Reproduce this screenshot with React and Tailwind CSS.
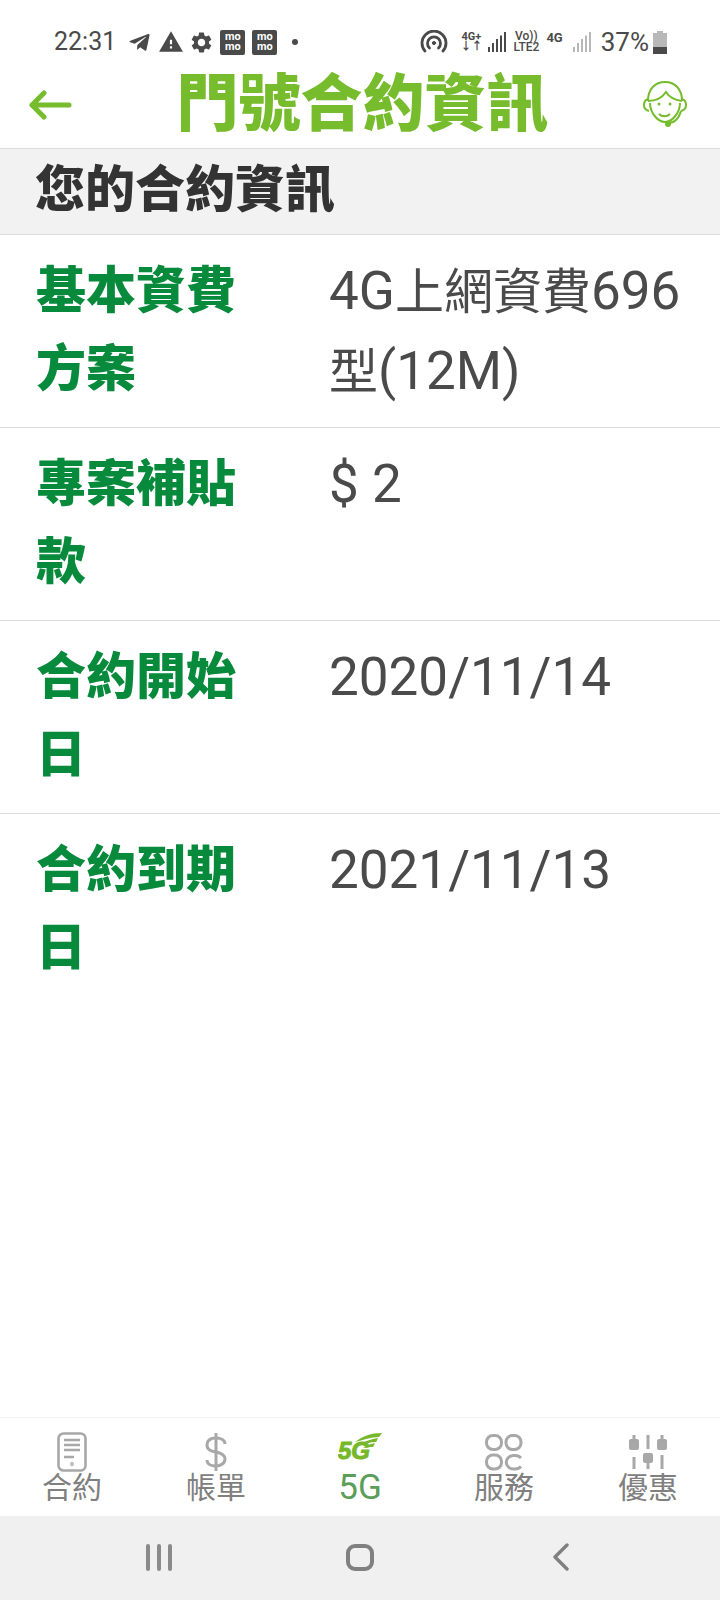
import { FaTelegramPlane } from 'react-icons/fa'
import { MdSettings, MdWarning } from 'react-icons/md'

const rows = [
  { label: '基本資費方案', value: ['4G', { cjk: '上網資費' }, '696', { cjk: '型' }, '(12M)'] },
  { label: '專案補貼款', value: ['$ 2'] },
  { label: '合約開始日', value: ['2020/11/14'] },
  { label: '合約到期日', value: ['2021/11/13'] },
]

function Momo() {
  return (
    <div className="flex h-[25px] w-[25px] flex-col items-center justify-center rounded-[2px] bg-[#4a4a4a] text-[11px] font-bold leading-[10px] text-white">
      <span>mo</span>
      <span>mo</span>
    </div>
  )
}

function Signal({ color }) {
  return (
    <svg width="19" height="20" viewBox="0 0 19 20" fill={color}>
      <rect x="0" y="15" width="2" height="5" />
      <rect x="4" y="11" width="2" height="9" />
      <rect x="8" y="7" width="2" height="13" />
      <rect x="12" y="3.5" width="2" height="16.5" />
      <rect x="16" y="0" width="2" height="20" />
    </svg>
  )
}

function StatusBar() {
  return (
    <div className="flex h-[64px] items-end justify-between pb-[2px] pl-[54px] pr-[53px] text-[#4a4a4a]">
      <div className="flex items-center">
        <span className="text-[25px] leading-[40px]">22:31</span>
        <FaTelegramPlane className="ml-[12px]" size={23} color="#4a4a4a" />
        <MdWarning className="ml-[7px]" size={26} color="#4a4a4a" />
        <MdSettings className="ml-[5px]" size={25} color="#4a4a4a" />
        <div className="ml-[6px]"><Momo /></div>
        <div className="ml-[7px]"><Momo /></div>
        <span className="ml-[15px] h-[6px] w-[6px] rounded-full bg-[#4a4a4a]" />
      </div>
      <div className="flex items-center">
        <svg width="28" height="24" viewBox="0 0 28 24" fill="none" stroke="#4a4a4a" strokeWidth="2.8" strokeLinecap="round">
          <path d="M5 21a12 12 0 1 1 18 0" />
          <path d="M9.5 18a6.5 6.5 0 1 1 9 0" />
          <circle cx="14" cy="13" r="1.6" fill="#4a4a4a" strokeWidth="1" />
        </svg>
        <div className="ml-[12px] flex w-[22px] flex-col items-center text-[11px] font-bold leading-[10px]">
          <span>4G+</span>
          <span>↓↑</span>
        </div>
        <div className="ml-[6px]"><Signal color="#4a4a4a" /></div>
        <div className="ml-[6px] flex flex-col items-center text-[12px] font-medium leading-[11px]">
          <span>Vo))</span>
          <span>LTE2</span>
        </div>
        <span className="mb-[9px] ml-[7px] text-[13px] font-bold leading-[11px]">4G</span>
        <div className="ml-[10px]"><Signal color="#b8b8b8" /></div>
        <span className="ml-[9px] text-[26px] leading-[40px]">37%</span>
        <div className="ml-[4px] flex h-[23px] w-[14px] flex-col">
          <span className="mx-auto h-[2px] w-[6px] bg-[#b8b8b8]" />
          <span className="h-[14px] bg-[#b8b8b8]" />
          <span className="h-[7px] bg-[#4a4a4a]" />
        </div>
      </div>
    </div>
  )
}

function Header() {
  return (
    <div className="flex h-[85px] items-center justify-between border-b border-[#dcdcdc] pb-[3px] pl-[28px] pr-[33px]">
      <svg width="44" height="30" viewBox="0 0 44 30" fill="none" stroke="#76bc2c" strokeWidth="5" strokeLinecap="round" strokeLinejoin="round">
        <path d="M41 15H4M16 3 4 15l12 12" />
      </svg>
      <h1 className="ml-[10px] text-[62px] font-black leading-none text-[#76bc2c]">門號合約資訊</h1>
      <svg width="44" height="48" viewBox="0 0 44 48" fill="none" stroke="#76bc2c" strokeWidth="2">
        <path d="M5 20C5 8 12 1 22 1s17 7 17 19" />
        <path d="M5 18c-3 1-4 4-4 6s1 5 5 6M39 18c3 1 4 4 4 6s-1 5-5 6" />
        <path d="M5 20c7 0 14-3 18-9 3 5 9 8 16 9" />
        <path d="M7 22c0 10 8 19 15 19s15-9 15-19" />
        <path d="M16 33c3 3 8 3 11 0" />
        <path d="M25 42c7 0 11-5 13-12" />
        <circle cx="16" cy="23" r="1.5" fill="#76bc2c" stroke="none" />
        <circle cx="27" cy="23" r="1.5" fill="#76bc2c" stroke="none" />
        <circle cx="25" cy="43" r="3" fill="#76bc2c" stroke="none" />
      </svg>
    </div>
  )
}

function TabIcon({ name }) {
  if (name === 'contract') {
    return (
      <svg width="30" height="40" viewBox="0 0 30 40" fill="none" stroke="#a8a8a8" strokeWidth="2.6">
        <rect x="1.5" y="1.5" width="27" height="37" rx="5" />
        <path d="M7 8h16M7 13h16M7 18h16M7 25h10" />
        <circle cx="15" cy="32" r="0.6" />
      </svg>
    )
  }
  if (name === 'bill') {
    return (
      <svg width="24" height="40" viewBox="0 0 24 40" fill="none" stroke="#a8a8a8" strokeWidth="3">
        <path d="M12 1v38" />
        <path d="M21 12c0-4-4-6-9-6s-9 2-9 7 4 6 9 7 9 3 9 7-4 7-9 7-9-2-9-6" />
      </svg>
    )
  }
  if (name === '5g') {
    return (
      <svg className="mb-[8px]" width="44" height="30" viewBox="0 0 44 30" fill="#76b82a">
        <text x="0" y="26" fontFamily="Liberation Sans" fontSize="24" fontWeight="700" fontStyle="italic" stroke="#76b82a" strokeWidth="1">5G</text>
        <path d="M17 9C25 3 33 0 44 0c-1 1-2 3-3 4-8 0-16 3-24 5Z" />
        <path d="M21 12c6-4 12-6 19-7-1 2-1 3-2 4-6 0-11 2-17 3Z" />
        <path d="M25 15c4-3 8-4 12-5l-2 4c-3 0-7 0-10 1Z" />
      </svg>
    )
  }
  if (name === 'service') {
    return (
      <svg width="38" height="37" viewBox="0 0 38 37" fill="none" stroke="#a8a8a8" strokeWidth="3">
        <rect x="1.5" y="1.5" width="15" height="14" rx="6.5" />
        <rect x="21" y="1.5" width="15" height="14" rx="6.5" />
        <rect x="1.5" y="21" width="15" height="14" rx="6.5" />
        <path d="M36 24a7.5 6.5 0 0 0-6-2.5h-1.5a7 6.5 0 0 0 0 13.5H30a7.5 6.5 0 0 0 6-2.5" />
      </svg>
    )
  }
  return (
    <svg width="38" height="34" viewBox="0 0 38 34" fill="#a8a8a8">
      <rect x="0" y="4" width="10" height="11" rx="2" />
      <rect x="3.5" y="0" width="3" height="6" />
      <rect x="3.5" y="22" width="3" height="12" />
      <rect x="17.5" y="0" width="3" height="14" />
      <rect x="14" y="18" width="10" height="10" rx="2" />
      <rect x="17.5" y="26" width="3" height="8" />
      <rect x="28" y="4" width="10" height="11" rx="2" />
      <rect x="31.5" y="0" width="3" height="6" />
      <rect x="31.5" y="20" width="3" height="14" />
    </svg>
  )
}

const tabs = [
  { name: 'contract', label: '合約' },
  { name: 'bill', label: '帳單' },
  { name: '5g', label: '5G', active: true },
  { name: 'service', label: '服務' },
  { name: 'promo', label: '優惠' },
]

export default function App() {
  return (
    <div
      className="flex h-[1600px] w-[720px] flex-col overflow-hidden bg-white"
      style={{ fontFamily: '"Roboto", "Noto Sans CJK TC", sans-serif' }}
    >
      <StatusBar />
      <Header />

      <div className="flex h-[86px] items-center border-b border-[#dcdcdc] bg-[#f2f2f2] pb-[3px] pl-[35px]">
        <h2 className="text-[50px] font-black leading-none text-[#333333]">您的合約資訊</h2>
      </div>

      <div className="flex-1">
        {rows.map((row) => (
          <div key={row.label} className="flex h-[193px] border-b border-[#dcdcdc] pl-[36px] pt-[17px] leading-[78px] last:border-b-0">
            <div className="w-[293px] pr-[60px] text-[50px] font-black text-[#078a3c]">{row.label}</div>
            <div className="w-[360px] text-[53px] text-[#4a4a4a]">
              {row.value.map((part, i) =>
                typeof part === 'string' ? part : <span key={i} className="text-[49px]">{part.cjk}</span>
              )}
            </div>
          </div>
        ))}
      </div>

      <div className="flex h-[99px] border-t border-[#f2f2f2]">
        {tabs.map((tab) => (
          <div key={tab.label} className="flex w-[144px] flex-col items-center pt-[14px]">
            <div className="flex h-[40px] items-center justify-center">
              <TabIcon name={tab.name} />
            </div>
            <span className={`-mt-[4px] leading-[40px] ${tab.active ? 'text-[35px] text-[#5a9e5a]' : 'text-[30px] text-[#808080]'}`}>
              {tab.label}
            </span>
          </div>
        ))}
      </div>

      <div className="flex h-[84px] items-center justify-center bg-[#f0f0f0] pb-[2px]">
        <div className="flex w-[201px] justify-center gap-[7px]">
          <span className="h-[27px] w-[4px] rounded-full bg-[#8a8a8a]" />
          <span className="h-[27px] w-[4px] rounded-full bg-[#8a8a8a]" />
          <span className="h-[27px] w-[4px] rounded-full bg-[#8a8a8a]" />
        </div>
        <div className="flex w-[201px] justify-center">
          <span className="h-[27px] w-[28px] rounded-[9px] border-[4px] border-[#808080]" />
        </div>
        <div className="flex w-[201px] justify-center">
          <svg width="16" height="28" viewBox="0 0 16 28" fill="none" stroke="#808080" strokeWidth="3.4" strokeLinecap="round" strokeLinejoin="round">
            <path d="M14 2 2 14l12 12" />
          </svg>
        </div>
      </div>
    </div>
  )
}
